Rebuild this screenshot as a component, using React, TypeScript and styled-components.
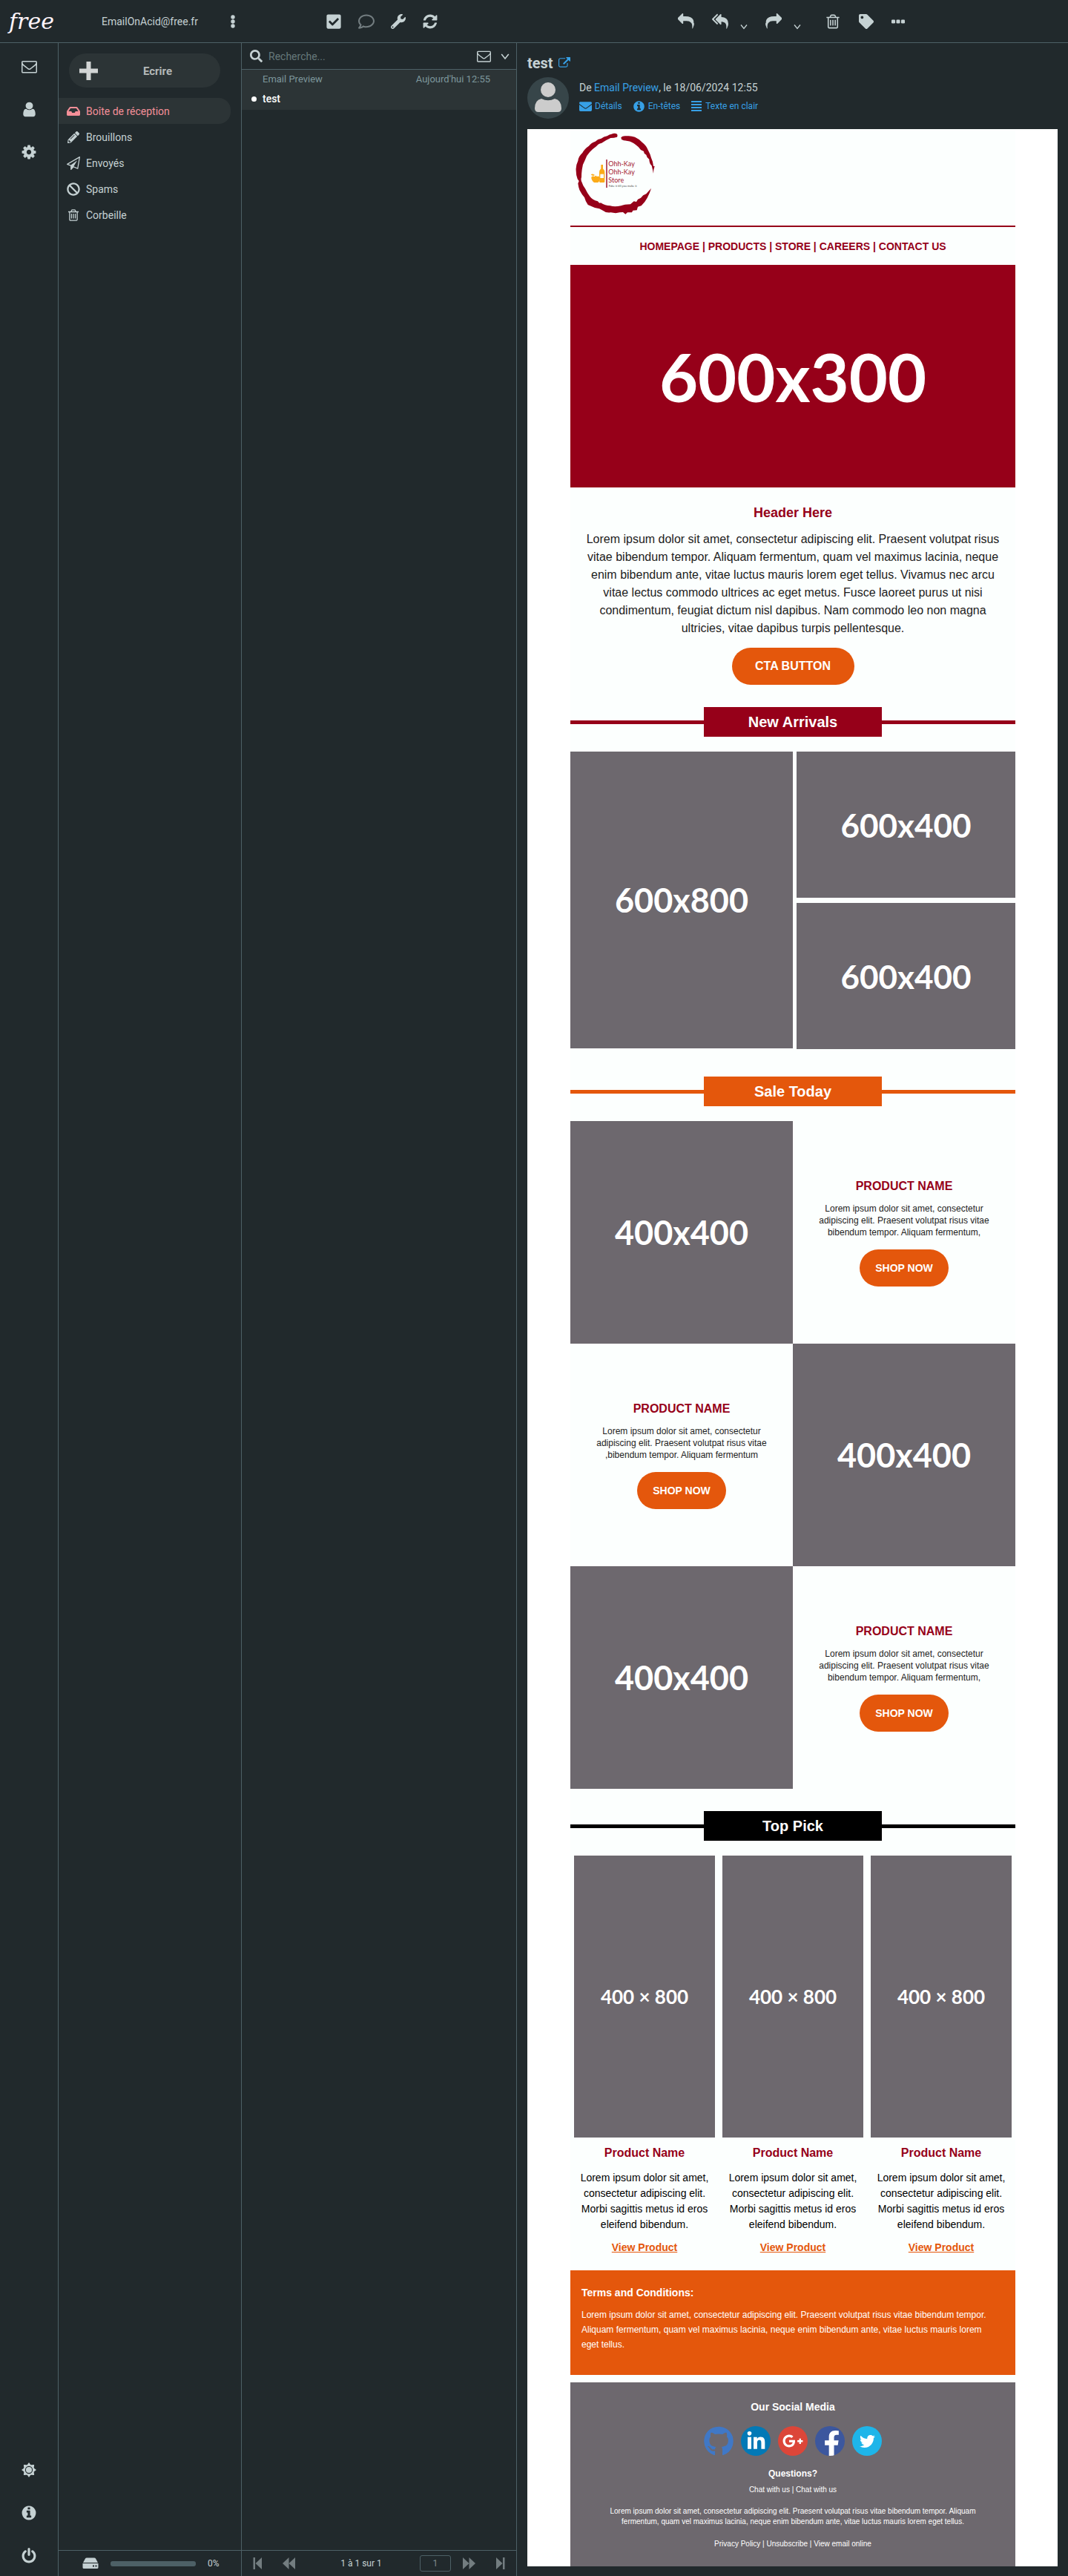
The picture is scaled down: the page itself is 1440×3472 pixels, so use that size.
import React from "react";
import styled, { createGlobalStyle } from "styled-components";
import {
  FaBan,
  FaCheckSquare,
  FaEnvelope,
  FaFacebookF,
  FaGithub,
  FaGooglePlusG,
  FaInbox,
  FaLinkedinIn,
  FaPencilAlt,
  FaRegComment,
  FaSearch,
  FaTag,
  FaTwitter,
  FaWrench,
} from "react-icons/fa";

const c = {
  bg: "#21292c",
  panel: "#2c3436",
  line: "#4d6066",
  text: "#c5d1d3",
  muted: "#7d979c",
  link: "#37a0e6",
  pink: "#f48f98",
  red: "#960019",
  orange: "#e4570c",
  grey: "#6d686e",
  paper: "#fcfffe",
};

const GlobalStyle = createGlobalStyle`
  * { box-sizing: border-box; }
  body { margin: 0; background: ${c.bg}; }
  h1, h2, h3, p, ul { margin: 0; padding: 0; }
  button, input { font: inherit; }
`;

/* ---------- icons ---------- */

const paths = {
  envelope:
    "M1664 1504v-768q-32 36-69 66-268 206-426 338-51 43-83 67t-86.5 48.5-102.5 24.5h-2q-48 0-102.5-24.5t-86.5-48.5-83-67q-158-132-426-338-37-30-69-66v768q0 13 9.5 22.5t22.5 9.5h1472q13 0 22.5-9.5t9.5-22.5zm0-1051v-24.5l-.5-13-3-12.5-5.5-9-9-7.5-14-2.5h-1472q-13 0-22.5 9.5t-9.5 22.5q0 168 147 284 193 152 401 317 6 5 35 29.5t46 37.5 44.5 31.5 50.5 27.5 43 9h2q20 0 43-9t50.5-27.5 44.5-31.5 46-37.5 35-29.5q208-165 401-317 54-43 100.5-115.5t46.5-131.5zm128-37v1088q0 66-47 113t-113 47h-1472q-66 0-113-47t-47-113v-1088q0-66 47-113t113-47h1472q66 0 113 47t47 113z",
  user:
    "M1536 1399q0 109-62.5 187t-150.5 78h-854q-88 0-150.5-78t-62.5-187q0-85 8.5-160.5t31.5-152 58.5-131 94-89 134.5-34.5q131 128 313 128t313-128q76 0 134.5 34.5t94 89 58.5 131 31.5 152 8.5 160.5zm-256-887q0 159-112.5 271.5t-271.5 112.5-271.5-112.5-112.5-271.5 112.5-271.5 271.5-112.5 271.5 112.5 112.5 271.5z",
  cog:
    "M1152 896q0-106-75-181t-181-75-181 75-75 181 75 181 181 75 181-75 75-181zm512-109v222q0 12-8 23t-20 13l-185 28q-19 54-39 91 35 50 107 138 10 12 10 25t-9 23q-27 37-99 108t-94 71q-12 0-26-9l-138-108q-44 23-91 38-16 136-29 186-7 28-36 28h-222q-14 0-24.5-8.5t-11.5-21.5l-28-184q-49-16-90-37l-141 107q-10 9-25 9-14 0-25-11-126-114-165-168-7-10-7-23 0-12 8-23 15-21 51-66.5t54-70.5q-27-50-41-99l-183-27q-13-2-21-12.5t-8-23.5v-222q0-12 8-23t19-13l186-28q14-46 39-92-40-57-107-138-10-12-10-24 0-10 9-23 26-36 98.5-107.5t94.5-71.5q13 0 26 10l138 107q44-23 91-38 16-136 29-186 7-28 36-28h222q14 0 24.5 8.5t11.5 21.5l28 184q49 16 90 37l142-107q9-9 24-9 13 0 25 10 129 119 165 170 7 8 7 22 0 12-8 23-15 21-51 66.5t-54 70.5q26 50 41 98l183 28q13 2 21 12.5t8 23.5z",
  info:
    "M1152 1376v-160q0-14-9-23t-23-9h-96v-512q0-14-9-23t-23-9h-320q-14 0-23 9t-9 23v160q0 14 9 23t23 9h96v320h-96q-14 0-23 9t-9 23v160q0 14 9 23t23 9h448q14 0 23-9t9-23zm-128-896v-160q0-14-9-23t-23-9h-192q-14 0-23 9t-9 23v160q0 14 9 23t23 9h192q14 0 23-9t9-23zm640 416q0 209-103 385.5t-279.5 279.5-385.5 103-385.5-103-279.5-279.5-103-385.5 103-385.5 279.5-279.5 385.5-103 385.5 103 279.5 279.5 103 385.5z",
  power:
    "M1664 896q0 156-61 298t-164 245-245 164-298 61-298-61-245-164-164-245-61-298q0-182 80.5-343t226.5-270q43-32 95.5-25t83.5 50q32 42 24.5 94.5t-49.5 84.5q-98 74-151.5 181t-53.5 228q0 104 40.5 198.5t109.5 163.5 163.5 109.5 198.5 40.5 198.5-40.5 163.5-109.5 109.5-163.5 40.5-198.5q0-121-53.5-228t-151.5-181q-42-32-49.5-84.5t24.5-94.5q31-43 84-50t95 25q146 109 226.5 270t80.5 343zm-640-768v640q0 52-38 90t-90 38-90-38-38-90v-640q0-52 38-90t90-38 90 38 38 90z",
  trash:
    "M704 736v576q0 14-9 23t-23 9h-64q-14 0-23-9t-9-23v-576q0-14 9-23t23-9h64q14 0 23 9t9 23zm256 0v576q0 14-9 23t-23 9h-64q-14 0-23-9t-9-23v-576q0-14 9-23t23-9h64q14 0 23 9t9 23zm256 0v576q0 14-9 23t-23 9h-64q-14 0-23-9t-9-23v-576q0-14 9-23t23-9h64q14 0 23 9t9 23zm128 724v-948h-896v948q0 22 7 40.5t14.5 27 10.5 8.5h832q3 0 10.5-8.5t14.5-27 7-40.5zm-672-1076h448l-48-117q-7-9-17-11h-317q-10 2-17 11zm928 32v64q0 14-9 23t-23 9h-96v948q0 83-47 143.5t-113 60.5h-832q-66 0-113-58.5t-47-141.5v-952h-96q-14 0-23-9t-9-23v-64q0-14 9-23t23-9h309l70-167q15-37 54-63t79-26h320q40 0 79 26t54 63l70 167h309q14 0 23 9t9 23z",
  reply:
    "M1792 1120q0 166-127 451-3 7-10.5 24t-13.5 30-13 22q-12 17-28 17-15 0-23.5-10t-8.5-25q0-9 2.5-26.5t2.5-23.5q5-68 5-123 0-112-19.5-200.5t-54-153.5-89-112-116-79.5-144-47-164-26-180-7.5h-224v256q0 26-19 45t-45 19-45-19l-512-512q-19-19-19-45t19-45l512-512q19-19 45-19t45 19 19 45v256h224q713 0 875 403 53 134 53 333z",
  replyAll:
    "M640 1082v70q0 42-39 59-13 5-25 5-27 0-45-19l-512-512q-19-19-19-45t19-45l512-512q29-31 70-14 39 17 39 59v69l-397 398q-19 19-19 45t19 45zm1152 58q0 58-17 133.5t-38.5 138-48 125-40.5 90.5l-20 40q-8 17-28 17-6 0-9-1-25-8-23-34 43-400-106-565-64-71-170.5-110.5t-267.5-52.5v251q0 42-39 59-13 5-25 5-27 0-45-19l-512-512q-19-19-19-45t19-45l512-512q29-31 70-14 39 17 39 59v262q411 28 599 221 169 173 169 509z",
  refresh:
    "M1639 1056q0 5-1 7-64 268-268 434.5t-478 166.5q-146 0-282.5-55t-243.5-157l-129 129q-19 19-45 19t-45-19-19-45v-448q0-26 19-45t45-19h448q26 0 45 19t19 45-19 45l-137 137q71 66 161 102t187 36q134 0 250-65t186-179q11-17 53-117 8-23 30-23h192q13 0 22.5 9.5t9.5 22.5zm25-800v448q0 26-19 45t-45 19h-448q-26 0-45-19t-19-45 19-45l138-138q-148-137-349-137-134 0-250 65t-186 179q-11 17-53 117-8 23-30 23h-199q-13 0-22.5-9.5t-9.5-22.5v-7q65-268 270-434.5t480-166.5q146 0 284 55.5t245 156.5l130-129q19-19 45-19t45 19 19 45z",
  plane:
    "M1764 11q33 24 27 64l-256 1536q-5 29-32 45-14 8-31 8-11 0-24-5l-527-215-298 327q-18 21-47 21-14 0-23-4-19-7-30-23.5t-11-36.5v-452l-472-193q-37-14-40-55-3-39 32-59l1664-960q35-21 68 2zm-342 1499l221-1323-1434 827 336 137 863-639-478 797z",
  external:
    "M1408 928v320q0 119-84.5 203.5t-203.5 84.5h-832q-119 0-203.5-84.5t-84.5-203.5v-832q0-119 84.5-203.5t203.5-84.5h704q14 0 23 9t9 23v64q0 14-9 23t-23 9h-704q-66 0-113 47t-47 113v832q0 66 47 113t113 47h832q66 0 113-47t47-113v-320q0-14 9-23t23-9h64q14 0 23 9t9 23zm384-864v512q0 26-19 45t-45 19-45-19l-176-176-652 652q-10 10-23 10t-23-10l-114-114q-10-10-10-23t10-23l652-652-176-176q-19-19-19-45t19-45 45-19h512q26 0 45 19t19 45z",
};

type IconProps = { name: keyof typeof paths; size: number; flip?: boolean };

const Icon = ({ name, size, flip }: IconProps) => (
  <svg width={size} height={size} viewBox="0 0 1792 1792" fill="currentColor" aria-hidden="true">
    <path d={paths[name]} transform={flip ? "translate(1792 0) scale(-1 1)" : undefined} />
  </svg>
);

const Chevron = ({ size }: { size: number }) => (
  <svg width={size} height={size} viewBox="0 0 10 10" fill="none" stroke="currentColor" strokeWidth="1.3" aria-hidden="true">
    <path d="M1 2.5 5 7.5 9 2.5" />
  </svg>
);

const Dots = ({ vertical }: { vertical?: boolean }) => (
  <svg width={vertical ? 6 : 18} height={vertical ? 18 : 6} fill="currentColor" aria-hidden="true">
    {vertical
      ? [3, 9, 15].map((p) => <circle key={p} cx="3" cy={p} r="2.7" />)
      : [0, 6.5, 13].map((p) => <rect key={p} x={p} y="0.5" width="5" height="5" rx="1.3" />)}
  </svg>
);

const Sun = () => (
  <svg width="20" height="20" viewBox="-10 -10 20 20" aria-hidden="true">
    <path
      fill="currentColor"
      d="M0-10 2.4-6.7 7.1-7.1 6.7-2.4 10 0 6.7 2.4 7.1 7.1 2.4 6.7 0 10-2.4 6.7-7.1 7.1-6.7 2.4-10 0-6.7-2.4-7.1-7.1-2.4-6.7Z"
    />
    <circle r="4.6" fill="none" stroke={c.bg} strokeWidth="1.1" />
  </svg>
);

const Drive = () => (
  <svg width="22" height="16" viewBox="0 0 22 16" fill="currentColor" aria-hidden="true">
    <path d="M4 1.6Q4.5 .5 6 .5H16Q17.5 .5 18 1.6L21 7H1Z" />
    <path fillRule="evenodd" d="M.5 8h21v5.5q0 1.5-1.5 1.5H2Q.5 15 .5 13.5ZM14 10.5v2h2v-2ZM17.5 10.5v2h2v-2Z" />
  </svg>
);

const PageEnd = ({ flip }: { flip?: boolean }) => (
  <svg width="12" height="16" viewBox="0 0 12 16" fill="currentColor" aria-hidden="true">
    <g transform={flip ? "translate(12 0) scale(-1 1)" : undefined}>
      <path d="M.5 0h2.5v16H.5ZM12 0v16L3.5 8Z" />
    </g>
  </svg>
);

const PageStep = ({ flip }: { flip?: boolean }) => (
  <svg width="17" height="16" viewBox="0 0 17 16" fill="currentColor" aria-hidden="true">
    <g transform={flip ? "translate(17 0) scale(-1 1)" : undefined}>
      <path d="M8.5 0v16L0 8ZM17 0v16L8.5 8Z" />
    </g>
  </svg>
);

const StoreLogo = () => (
  <svg width="120" height="120" viewBox="27 12 360 360" role="img" aria-label="Ohh-Kay Ohh-Kay Store">
    <g fill={c.red}>
      <path d="M216 32Q206 27 194 32 186 33 176 40 162 42 152 50 138 52 128 62 112 66 102 80 84 92 76 108 60 122 58 140 48 160 50 180 50 200 56 214L62 222 58 232Q60 250 66 262 74 278 84 288 88 304 98 318 112 324 126 330 146 332 160 342 172 352 190 349 212 354 226 349L240 348 250 356 258 349 276 349 280 341 296 340 300 326 314 322Q330 306 338 290 348 272 354 252 342 264 334 274 320 278 312 290L300 296 294 306 284 304 270 316Q246 316 232 322 206 328 188 322 168 322 150 310 144 314 138 304 116 298 106 284 94 268 88 254 78 242 74 228 68 218 72 206 72 190 74 176 76 154 86 138 92 118 106 104 118 92 132 82 138 72 154 68 172 56 190 48 204 48 216 44Q219 38 216 32Z" />
      <path d="M232 46Q238 38 254 40 272 38 288 44 306 52 318 66 334 78 342 98 350 112 354 128 362 144 363 162L368 162 364 176 363 192 360 176 356 160Q346 150 346 134 336 128 334 116L326 110 324 102 312 96Q304 84 292 76 276 62 258 60 240 58 234 54Z" />
      <rect x="172" y="135" width="4" height="114" />
    </g>
    <g fill="#fbab18">
      <path d="M151 156h8v16q7 6 7 16v36q0 4-4 4h-16q-3-4-1-8 4-10-1-18v-14q0-10 7-16Z" />
      <path d="M112 206q4-6 14-2 4-8 8 0 10-4 13 4 2 12-8 20h-16q-12-10-11-22ZM110 196q8-6 16 2-8 6-16-2Z" />
    </g>
    <rect x="148" y="194" width="14" height="16" fill={c.paper} />
    <g fontFamily="Lato, sans-serif" fontSize="27" fill="#a3172f">
      <text x="181" y="161">Ohh-Kay</text>
      <text x="181" y="194">Ohh-Kay</text>
      <text x="181" y="227">Store</text>
    </g>
    <text x="182" y="247" fontFamily="Lato, sans-serif" fontSize="12" fill="#555">
      Fake it till you make it
    </text>
  </svg>
);

/* ---------- webmail shell ---------- */

const Shell = styled.div`
  min-height: 100vh;
  display: flex;
  flex-direction: column;
  background: ${c.bg};
  color: ${c.text};
  font-family: Roboto, "Liberation Sans", sans-serif;
  font-size: 14px;
  line-height: 20px;
`;

const columns = "79px 247px 371px minmax(0, 1fr)";

const TopBar = styled.header`
  display: grid;
  grid-template-columns: ${columns};
  align-items: center;
  height: 58px;
  border-bottom: 1px solid ${c.line};
`;

const Brand = styled.a`
  padding-left: 12px;
  color: #fff5fb;
  text-decoration: none;
  font: italic 400 30px/40px "DejaVu Serif", "Liberation Serif", serif;
`;

const Account = styled.div`
  display: flex;
  justify-content: space-between;
  align-items: center;
  padding: 0 9px 0 58px;
`;

const Bare = styled.button<{ $dim?: boolean }>`
  display: inline-flex;
  align-items: center;
  justify-content: center;
  padding: 0;
  border: 0;
  background: none;
  color: ${(p) => (p.$dim ? "#737d80" : c.text)};
  cursor: pointer;
`;

const ListTools = styled.div`
  display: flex;
  align-items: center;
  gap: 22px;
  padding-left: 113px;
`;

const ReadTools = styled.div`
  display: flex;
  justify-content: center;
  gap: 32px;
  padding-right: 4px;
`;

const ToolGroup = styled.div<{ $gap: number }>`
  display: flex;
  align-items: center;
  gap: ${(p) => p.$gap}px;
`;

const ChevronButton = styled(Bare)`
  padding-top: 14px;
`;

const Body = styled.div`
  flex: 1;
  display: grid;
  grid-template-columns: ${columns};
`;

const Rail = styled.nav`
  display: flex;
  flex-direction: column;
  justify-content: space-between;
  border-right: 1px solid ${c.line};
`;

const RailGroup = styled.div`
  display: flex;
  flex-direction: column;
`;

const RailButton = styled(Bare)`
  height: 58px;
  padding-top: 4px;
`;

const Column = styled.section`
  display: flex;
  flex-direction: column;
  border-right: 1px solid ${c.line};
`;

const Compose = styled.button`
  display: flex;
  align-items: center;
  height: 46px;
  margin: 14px 28px 14px 14px;
  padding: 0 14px;
  border: 0;
  border-radius: 23px;
  background: ${c.panel};
  color: #b4b8b8;
  font-weight: 700;
  font-size: 15px;
`;

const ComposeLabel = styled.span`
  flex: 1;
  padding: 2px 0 0 10px;
`;

const Folders = styled.ul`
  flex: 1;
  list-style: none;
`;

const Folder = styled.a<{ $active?: boolean }>`
  display: flex;
  align-items: center;
  gap: 8px;
  height: 35px;
  margin-right: 14px;
  padding-left: 11px;
  border-radius: 0 16px 16px 0;
  background: ${(p) => (p.$active ? c.panel : "none")};
  color: ${(p) => (p.$active ? c.pink : c.text)};
  text-decoration: none;

  svg {
    width: 18px;
  }
`;

const BottomBar = styled.footer`
  display: flex;
  align-items: center;
  height: 35px;
  border-top: 1px solid ${c.line};
  font-size: 12px;
`;

const Quota = styled(BottomBar)`
  gap: 16px;
  padding-left: 32px;
`;

const QuotaBar = styled.div`
  width: 115px;
  height: 7px;
  border-radius: 3px;
  background: ${c.line};
`;

const Pager = styled(BottomBar)`
  justify-content: space-between;
  padding: 0 15px;
`;

const PagerPair = styled.div`
  display: flex;
  align-items: center;
  gap: 28px;
`;

const PagerNext = styled(PagerPair)`
  gap: 16px;
`;

const PageCount = styled.span`
  padding-left: 10px;
`;

const PageInput = styled.input`
  width: 42px;
  height: 22px;
  padding: 0;
  border: 1px solid ${c.line};
  border-radius: 3px;
  background: none;
  color: #7f8a8c;
  text-align: center;
`;

const LastPage = styled(Bare)`
  margin-left: 12px;
`;

const Search = styled.form`
  display: flex;
  align-items: center;
  height: 36px;
  padding: 0 9px 0 11px;
  border-bottom: 1px solid ${c.line};
`;

const SearchInput = styled.input`
  flex: 1;
  min-width: 0;
  height: 32px;
  padding: 0 8px;
  border: 0;
  background: none;
  color: ${c.text};

  &::placeholder {
    color: #66787a;
    opacity: 1;
  }
`;

const SearchTools = styled.div`
  display: flex;
  align-items: center;
  gap: 13px;
`;

const Message = styled.a`
  display: flex;
  flex-direction: column;
  gap: 6px;
  height: 54px;
  padding: 3px 35px 0 28px;
  background: ${c.panel};
  color: #fff;
  text-decoration: none;
`;

const Meta = styled.span`
  display: flex;
  justify-content: space-between;
  color: ${c.muted};
  font-size: 13px;
`;

const Subject = styled.span`
  display: flex;
  align-items: center;
  gap: 8px;
  margin-left: -15px;
  font-weight: 500;

  &::before {
    content: "";
    width: 7px;
    height: 7px;
    border-radius: 50%;
    background: #fff;
  }
`;

const Spacer = styled.div`
  flex: 1;
`;

/* ---------- reading pane ---------- */

const Reader = styled.main`
  padding: 14px 14px 13px;
`;

const ReaderTitle = styled.h1`
  display: flex;
  align-items: center;
  gap: 7px;
  font-size: 20px;
  line-height: 26px;
`;

const BlueLink = styled.a`
  display: inline-flex;
  align-items: center;
  gap: 4px;
  color: ${c.link};
  text-decoration: none;
`;

const Sender = styled.div`
  display: flex;
  gap: 14px;
  margin: 6px 0 14px;
`;

const Avatar = styled.div`
  width: 56px;
  height: 56px;
  border-radius: 50%;
  background: #374549;
`;

const SenderLines = styled.div`
  display: flex;
  flex-direction: column;
  gap: 5px;
  padding-top: 4px;
`;

const SenderLinks = styled.div`
  display: flex;
  gap: 14px;
  font-size: 12px;
`;

const Frame = styled.div`
  padding: 0 57px 0 58px;
  background: #fff;
`;

/* ---------- the e-mail itself ---------- */

const Email = styled.article`
  max-width: 600px;
  margin: 0 auto;
  background: ${c.paper};
  color: #1c1c1c;
  font-family: Arial, "Liberation Sans", sans-serif;
  text-align: center;
`;

const LogoRow = styled.div`
  display: flex;
  padding-bottom: 10px;
  border-bottom: 2px solid ${c.red};
`;

const Menu = styled.nav`
  padding: 16px 0 15px;
  color: ${c.red};
  font-size: 14px;
  font-weight: 700;
  line-height: 20px;
`;

const PlainLink = styled.a`
  color: inherit;
  text-decoration: none;
`;

const Placeholder = styled.div<{ $h: number; $size: number; $color?: string }>`
  display: flex;
  align-items: center;
  justify-content: center;
  height: ${(p) => p.$h}px;
  background: ${(p) => p.$color || c.grey};
  color: #fff;
  font: 700 ${(p) => p.$size}px/1 Lato, sans-serif;
`;

const Intro = styled.div`
  display: flex;
  flex-direction: column;
  align-items: center;
  padding: 20px 20px 30px;
`;

const IntroTitle = styled.h2`
  margin-bottom: 10px;
  color: ${c.red};
  font-size: 18px;
  line-height: 28px;
`;

const IntroText = styled.p`
  margin-bottom: 14px;
  font-size: 16px;
  line-height: 24px;
`;

const Pill = styled.a<{ $large?: boolean }>`
  display: block;
  width: ${(p) => (p.$large ? 165 : 120)}px;
  border-radius: 25px;
  background: ${c.orange};
  color: #fff;
  font-size: ${(p) => (p.$large ? 16 : 14)}px;
  font-weight: 700;
  line-height: 50px;
  text-decoration: none;
`;

const Banner = styled.div<{ $color: string }>`
  display: grid;
  grid-template-columns: 1fr 240px 1fr;
  align-items: center;
  margin-bottom: 20px;

  &::before,
  &::after {
    content: "";
    height: 5px;
    background: ${(p) => p.$color};
  }
`;

const BannerTitle = styled.h2<{ $color: string }>`
  background: ${(p) => p.$color};
  color: #fff;
  font-size: 20px;
  line-height: 40px;
`;

const Gallery = styled.div`
  display: grid;
  grid-template-columns: 300fr 295fr;
  gap: 5px;
  margin-bottom: 37px;
`;

const GalleryStack = styled.div`
  display: grid;
  gap: 7px;
`;

const SaleGrid = styled.div`
  display: grid;
  grid-template-columns: 1fr 1fr;
  margin-bottom: 30px;
`;

const SaleCard = styled.div`
  display: flex;
  flex-direction: column;
  align-items: center;
  justify-content: center;
`;

const SaleName = styled.h3`
  margin-bottom: 12px;
  color: ${c.red};
  font-size: 16px;
  line-height: 20px;
`;

const SaleText = styled.p`
  width: 250px;
  margin-bottom: 15px;
  font-size: 12px;
  line-height: 16px;
`;

const Picks = styled.div`
  display: grid;
  grid-template-columns: repeat(3, 1fr);
  gap: 10px;
  padding: 0 5px 20px;
`;

const PickName = styled.h3`
  margin: 10px 0 12px;
  color: ${c.red};
  font-size: 16px;
  line-height: 22px;
`;

const PickText = styled.p`
  margin-bottom: 9px;
  padding: 0 5px;
  color: #000;
  font-size: 14px;
  line-height: 21px;
`;

const PickLink = styled.a`
  color: ${c.orange};
  font-size: 14px;
  font-weight: 700;
  line-height: 22px;
`;

const Terms = styled.section`
  margin-bottom: 10px;
  padding: 20px 30px 31px 15px;
  background: ${c.orange};
  color: #fff;
  font-size: 12px;
  line-height: 20px;
  text-align: left;
`;

const SmallTitle = styled.h3`
  font-size: 14px;
  line-height: 20px;
`;

const TermsTitle = styled(SmallTitle)`
  margin-bottom: 10px;
`;

const MailFooter = styled.footer`
  padding: 23px 30px;
  background: ${c.grey};
  color: #fff;
  font-size: 10px;
  line-height: 14px;
`;

const Socials = styled.div`
  display: flex;
  justify-content: center;
  gap: 10px;
  margin: 16px 0 14px;
`;

const Social = styled.a<{ $bg: string; $color?: string }>`
  display: flex;
  align-items: center;
  justify-content: center;
  width: 40px;
  height: 40px;
  overflow: hidden;
  border-radius: 50%;
  background: ${(p) => p.$bg};
  color: ${(p) => p.$color || "#fff"};
`;

const Questions = styled.h3`
  margin-bottom: 5px;
  font-size: 12px;
  line-height: 20px;
`;

const Legal = styled.p`
  margin: 15px 0 16px;
`;

const menu = ["HOMEPAGE", "PRODUCTS", "STORE", "CAREERS", "CONTACT US"];

const Links = ({ items }: { items: string[] }) => (
  <>
    {items.map((item, i) => (
      <React.Fragment key={i}>
        {i > 0 && " | "}
        <PlainLink href="#">{item}</PlainLink>
      </React.Fragment>
    ))}
  </>
);

const Section = ({ color, children }: { color: string; children: string }) => (
  <Banner $color={color}>
    <BannerTitle $color={color}>{children}</BannerTitle>
  </Banner>
);

const Sale = ({ last }: { last: string }) => (
  <SaleCard>
    <SaleName>PRODUCT NAME</SaleName>
    <SaleText>
      Lorem ipsum dolor sit amet, consectetur adipiscing elit. Praesent volutpat risus vitae {last}
    </SaleText>
    <Pill href="#">SHOP NOW</Pill>
  </SaleCard>
);

const SalePicture = () => (
  <Placeholder $h={300} $size={45}>
    400x400
  </Placeholder>
);

const lorem =
  "Lorem ipsum dolor sit amet, consectetur adipiscing elit. Praesent volutpat risus vitae bibendum tempor. Aliquam fermentum, quam vel maximus lacinia, neque enim bibendum ante, vitae luctus mauris lorem eget tellus.";

const Newsletter = () => (
  <Email>
    <LogoRow>
      <StoreLogo />
    </LogoRow>
    <Menu>
      <Links items={menu} />
    </Menu>
    <Placeholder $h={300} $size={90} $color={c.red}>
      600x300
    </Placeholder>
    <Intro>
      <IntroTitle>Header Here</IntroTitle>
      <IntroText>
        {lorem} Vivamus nec arcu vitae lectus commodo ultrices ac eget metus. Fusce laoreet purus ut nisi condimentum,
        feugiat dictum nisl dapibus. Nam commodo leo non magna ultricies, vitae dapibus turpis pellentesque.
      </IntroText>
      <Pill href="#" $large>
        CTA BUTTON
      </Pill>
    </Intro>

    <Section color={c.red}>New Arrivals</Section>
    <Gallery>
      <Placeholder $h={400} $size={45}>
        600x800
      </Placeholder>
      <GalleryStack>
        <Placeholder $h={197} $size={44}>
          600x400
        </Placeholder>
        <Placeholder $h={197} $size={44}>
          600x400
        </Placeholder>
      </GalleryStack>
    </Gallery>

    <Section color={c.orange}>Sale Today</Section>
    <SaleGrid>
      <SalePicture />
      <Sale last="bibendum tempor. Aliquam fermentum," />
      <Sale last=",bibendum tempor. Aliquam fermentum" />
      <SalePicture />
      <SalePicture />
      <Sale last="bibendum tempor. Aliquam fermentum," />
    </SaleGrid>

    <Section color="#000">Top Pick</Section>
    <Picks>
      {[1, 2, 3].map((n) => (
        <div key={n}>
          <Placeholder $h={380} $size={26}>
            400 × 800
          </Placeholder>
          <PickName>Product Name</PickName>
          <PickText>Lorem ipsum dolor sit amet, consectetur adipiscing elit. Morbi sagittis metus id eros eleifend bibendum.</PickText>
          <PickLink href="#">View Product</PickLink>
        </div>
      ))}
    </Picks>

    <Terms>
      <TermsTitle>Terms and Conditions:</TermsTitle>
      <p>{lorem}</p>
    </Terms>

    <MailFooter>
      <SmallTitle>Our Social Media</SmallTitle>
      <Socials>
        <Social href="#" aria-label="GitHub" $bg="none" $color="#4078c6">
          <FaGithub size={41} />
        </Social>
        <Social href="#" aria-label="LinkedIn" $bg="#0279b6">
          <FaLinkedinIn size={27} />
        </Social>
        <Social href="#" aria-label="Google Plus" $bg="#dc4639">
          <FaGooglePlusG size={28} />
        </Social>
        <Social href="#" aria-label="Facebook" $bg="#3c579e">
          <svg width="40" height="40" viewBox="0 0 40 40" aria-hidden="true">
            <FaFacebookF x="5" y="6" size={35} />
          </svg>
        </Social>
        <Social href="#" aria-label="Twitter" $bg="#1eb5e9">
          <FaTwitter size={21} />
        </Social>
      </Socials>
      <Questions>Questions?</Questions>
      <p>
        <Links items={["Chat with us", "Chat with us"]} />
      </p>
      <Legal>{lorem}</Legal>
      <p>
        <Links items={["Privacy Policy", "Unsubscribe", "View email online"]} />
      </p>
    </MailFooter>
  </Email>
);

const folders = [
  { label: "Boîte de réception", icon: <FaInbox size={18} />, active: true },
  { label: "Brouillons", icon: <FaPencilAlt size={16} /> },
  { label: "Envoyés", icon: <Icon name="plane" size={18} /> },
  { label: "Spams", icon: <FaBan size={18} /> },
  { label: "Corbeille", icon: <Icon name="trash" size={18} /> },
];

export default function App() {
  return (
    <Shell>
      <GlobalStyle />
      <TopBar>
        <Brand href="#">free</Brand>
        <Account>
          <span>EmailOnAcid@free.fr</span>
          <Bare aria-label="Options">
            <Dots vertical />
          </Bare>
        </Account>
        <ListTools>
          <Bare aria-label="Sélectionner">
            <FaCheckSquare size={22} />
          </Bare>
          <Bare aria-label="Discussions" $dim>
            <FaRegComment size={22} />
          </Bare>
          <Bare aria-label="Actions">
            <FaWrench size={20} />
          </Bare>
          <Bare aria-label="Actualiser">
            <Icon name="refresh" size={22} />
          </Bare>
        </ListTools>
        <ReadTools>
          <ToolGroup $gap={24}>
            <Bare aria-label="Répondre">
              <Icon name="reply" size={22} />
            </Bare>
            <ToolGroup $gap={16}>
              <Bare aria-label="Répondre à tous">
                <Icon name="replyAll" size={22} />
              </Bare>
              <ChevronButton aria-label="Options de réponse">
                <Chevron size={10} />
              </ChevronButton>
            </ToolGroup>
            <ToolGroup $gap={16}>
              <Bare aria-label="Transférer">
                <Icon name="reply" size={22} flip />
              </Bare>
              <ChevronButton aria-label="Options de transfert">
                <Chevron size={10} />
              </ChevronButton>
            </ToolGroup>
          </ToolGroup>
          <ToolGroup $gap={24}>
            <Bare aria-label="Supprimer">
              <Icon name="trash" size={22} />
            </Bare>
            <Bare aria-label="Marquer">
              <FaTag size={20} />
            </Bare>
            <Bare aria-label="Plus">
              <Dots />
            </Bare>
          </ToolGroup>
        </ReadTools>
      </TopBar>

      <Body>
        <Rail>
          <RailGroup>
            <RailButton aria-label="Courriel">
              <Icon name="envelope" size={21} />
            </RailButton>
            <RailButton aria-label="Contacts">
              <Icon name="user" size={23} />
            </RailButton>
            <RailButton aria-label="Paramètres">
              <Icon name="cog" size={22} />
            </RailButton>
          </RailGroup>
          <RailGroup>
            <RailButton aria-label="Mode clair">
              <Sun />
            </RailButton>
            <RailButton aria-label="À propos">
              <Icon name="info" size={22} />
            </RailButton>
            <RailButton aria-label="Déconnexion">
              <Icon name="power" size={22} />
            </RailButton>
          </RailGroup>
        </Rail>

        <Column>
          <Compose>
            <svg width="25" height="25" aria-hidden="true">
              <path d="M12.5 0v25M0 12.5h25" stroke="#d2d5d5" strokeWidth="6" />
            </svg>
            <ComposeLabel>Ecrire</ComposeLabel>
          </Compose>
          <Folders>
            {folders.map((f) => (
              <li key={f.label}>
                <Folder href="#" $active={f.active}>
                  {f.icon}
                  {f.label}
                </Folder>
              </li>
            ))}
          </Folders>
          <Quota>
            <Drive />
            <QuotaBar />
            <span>0%</span>
          </Quota>
        </Column>

        <Column>
          <Search>
            <FaSearch size={17} aria-hidden="true" />
            <SearchInput type="text" placeholder="Recherche..." aria-label="Recherche" />
            <SearchTools>
              <Bare type="button" aria-label="Non lus">
                <Icon name="envelope" size={19} />
              </Bare>
              <Bare type="button" aria-label="Options de recherche">
                <Chevron size={12} />
              </Bare>
            </SearchTools>
          </Search>
          <Message href="#">
            <Meta>
              <span>Email Preview</span>
              <span>Aujourd'hui 12:55</span>
            </Meta>
            <Subject>test</Subject>
          </Message>
          <Spacer />
          <Pager>
            <PagerPair>
              <Bare aria-label="Première page" $dim>
                <PageEnd />
              </Bare>
              <Bare aria-label="Page précédente" $dim>
                <PageStep />
              </Bare>
            </PagerPair>
            <PageCount>1 à 1 sur 1</PageCount>
            <PagerNext>
              <PageInput type="text" defaultValue="1" aria-label="Page" />
              <Bare aria-label="Page suivante" $dim>
                <PageStep flip />
              </Bare>
              <LastPage aria-label="Dernière page" $dim>
                <PageEnd flip />
              </LastPage>
            </PagerNext>
          </Pager>
        </Column>

        <Reader>
          <ReaderTitle>
            test
            <BlueLink href="#" aria-label="Ouvrir dans une nouvelle fenêtre">
              <Icon name="external" size={16} />
            </BlueLink>
          </ReaderTitle>
          <Sender>
            <Avatar>
              <svg width="56" height="56" fill="#ccc" aria-hidden="true">
                <circle cx="28" cy="17" r="10" />
                <path d="M19 29Q28 33.5 37 29 46 31 46 42q0 5-5 5H15q-5 0-5-5Q10 31 19 29Z" />
              </svg>
            </Avatar>
            <SenderLines>
              <div>
                De <BlueLink href="#">Email Preview</BlueLink>, le 18/06/2024 12:55
              </div>
              <SenderLinks>
                <BlueLink href="#">
                  <FaEnvelope size={17} />
                  Détails
                </BlueLink>
                <BlueLink href="#">
                  <Icon name="info" size={17} />
                  En-têtes
                </BlueLink>
                <BlueLink href="#">
                  <svg width="16" height="14" aria-hidden="true">
                    <path d="M1 1h14M1 5h14M1 9h14M1 13h14" stroke="currentColor" strokeWidth="2" />
                  </svg>
                  Texte en clair
                </BlueLink>
              </SenderLinks>
            </SenderLines>
          </Sender>
          <Frame>
            <Newsletter />
          </Frame>
        </Reader>
      </Body>
    </Shell>
  );
}
